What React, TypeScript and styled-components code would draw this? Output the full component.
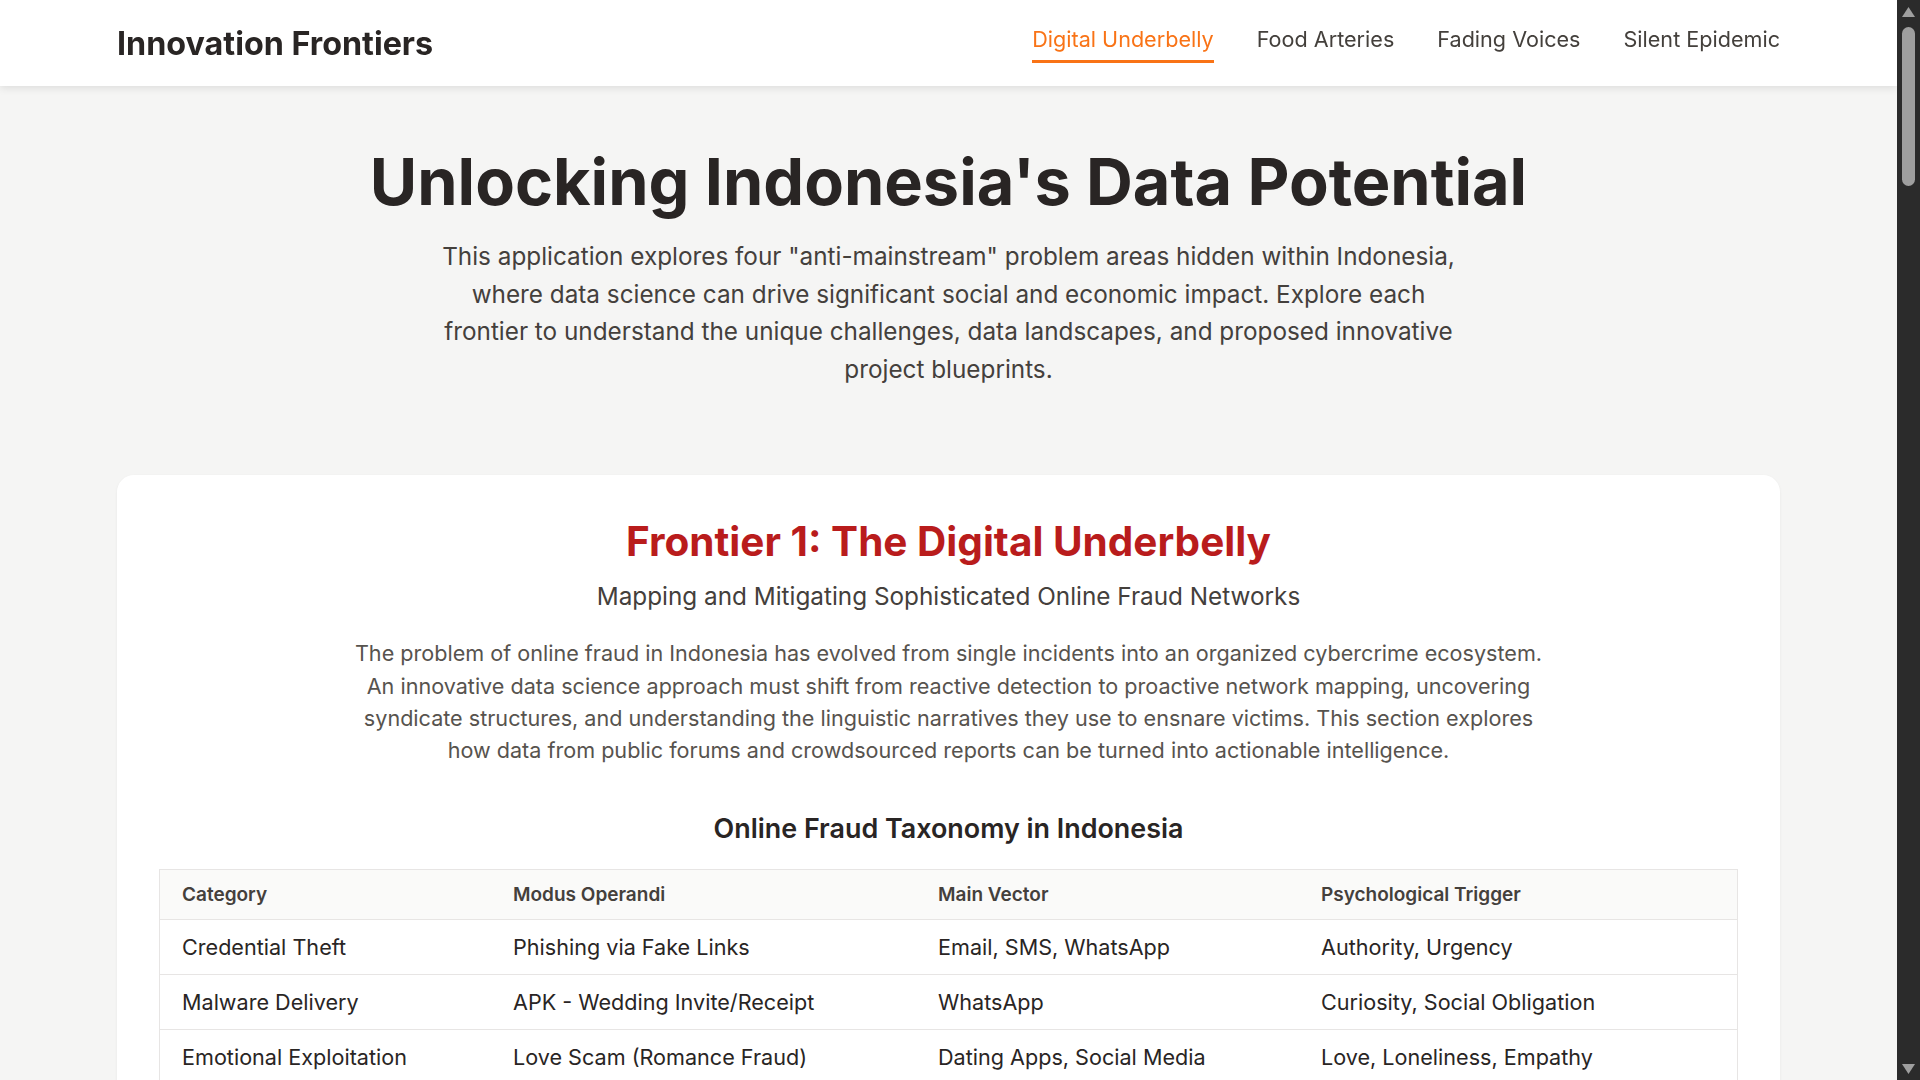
import React from "react";
import styled, { createGlobalStyle } from "styled-components";

const GlobalStyle = createGlobalStyle`
  html, body {
    margin: 0;
    height: 100%;
    overflow: hidden;
  }

  body {
    background: #f5f5f4;
    font-family: Inter, "Noto Sans", sans-serif;
    color: #292524;
  }
`;

type Frontier = {
  id: string;
  nav: string;
  accent: string;
  title: string;
  subtitle: string;
  text: string;
  tableTitle: string;
  columns: string[];
  rows: string[][];
  sources: { name: string; detail: string }[];
  blueprint: { step: string; text: string }[];
};

const frontiers: Frontier[] = [
  {
    id: "digital",
    nav: "Digital Underbelly",
    accent: "#b91c1c",
    title: "Frontier 1: The Digital Underbelly",
    subtitle: "Mapping and Mitigating Sophisticated Online Fraud Networks",
    text:
      "The problem of online fraud in Indonesia has evolved from single incidents into an organized cybercrime ecosystem. An innovative data science approach must shift from reactive detection to proactive network mapping, uncovering syndicate structures, and understanding the linguistic narratives they use to ensnare victims. This section explores how data from public forums and crowdsourced reports can be turned into actionable intelligence.",
    tableTitle: "Online Fraud Taxonomy in Indonesia",
    columns: ["Category", "Modus Operandi", "Main Vector", "Psychological Trigger"],
    rows: [
      ["Credential Theft", "Phishing via Fake Links", "Email, SMS, WhatsApp", "Authority, Urgency"],
      ["Malware Delivery", "APK - Wedding Invite/Receipt", "WhatsApp", "Curiosity, Social Obligation"],
      ["Emotional Exploitation", "Love Scam (Romance Fraud)", "Dating Apps, Social Media", "Love, Loneliness, Empathy"],
      ["Financial Lure", "Fake Investment & Robot Trading", "Telegram, Instagram", "Greed, Fear of Missing Out"],
      ["Predatory Lending", "Illegal Online Loans (Pinjol)", "Play Store, SMS Blasts", "Financial Pressure, Shame"],
      ["Impersonation", "Fake Courier / Bank Officer", "Phone Call, WhatsApp", "Trust, Fear of Loss"],
    ],
    sources: [
      { name: "Crowdsourced Reports", detail: "Public complaint portals and community reporting of scam numbers and accounts." },
      { name: "Public Forums", detail: "Discussion threads where victims describe scripts, links and payment channels." },
      { name: "Social Media Text", detail: "Posts and comments carrying recurring narratives and bait phrases." },
    ],
    blueprint: [
      { step: "Collect", text: "Scrape and normalize scam reports, phone numbers, account IDs and message texts." },
      { step: "Connect", text: "Build a graph of shared identifiers to reveal clusters that behave as syndicates." },
      { step: "Understand", text: "Apply topic modelling on Bahasa Indonesia texts to track evolving fraud narratives." },
      { step: "Act", text: "Publish an early-warning dashboard for banks, platforms and the public." },
    ],
  },
  {
    id: "food",
    nav: "Food Arteries",
    accent: "#15803d",
    title: "Frontier 2: The Food Arteries",
    subtitle: "Tracing Inefficiencies in the Archipelago's Food Supply Chains",
    text:
      "Food prices across Indonesia's thousands of islands swing sharply between harvest and lean seasons, and between production centres and remote markets. Data on transport routes, market prices and weather can expose where the arteries of the food system are clogged, helping policy makers and farmers respond before shortages turn into crises.",
    tableTitle: "Key Chokepoints in the Food Distribution Chain",
    columns: ["Stage", "Main Issue", "Observable Signal", "Impact"],
    rows: [
      ["Farm Gate", "Low Bargaining Power", "Farm-gate Price Gap", "Farmer Income Loss"],
      ["Collection", "Layered Middlemen", "Margin per Trader Level", "Price Inflation"],
      ["Inter-island Transport", "Port Congestion", "Ship Dwell Time", "Supply Delays"],
      ["Storage", "Limited Cold Chain", "Post-harvest Loss Rate", "Food Waste"],
      ["Retail Market", "Price Speculation", "Daily Price Volatility", "Consumer Burden"],
    ],
    sources: [
      { name: "Market Price Feeds", detail: "Daily commodity prices collected from traditional markets in each province." },
      { name: "Shipping Data", detail: "Vessel schedules and port activity records for inter-island logistics." },
      { name: "Weather & Harvest", detail: "Rainfall, planting calendars and harvest estimates by region." },
    ],
    blueprint: [
      { step: "Collect", text: "Merge price, logistics and weather data into a single spatial time series." },
      { step: "Model", text: "Forecast regional price spikes using lagged supply and transport indicators." },
      { step: "Locate", text: "Identify the routes and nodes that contribute the most to price disparity." },
      { step: "Act", text: "Recommend buffer stock placement and shipping priorities for lean seasons." },
    ],
  },
  {
    id: "voices",
    nav: "Fading Voices",
    accent: "#1d4ed8",
    title: "Frontier 3: The Fading Voices",
    subtitle: "Documenting and Revitalizing Endangered Regional Languages",
    text:
      "Indonesia is home to more than seven hundred living languages, yet many are spoken only by the elderly and are no longer passed to children. Data science can help record, transcribe and analyse these languages at scale, creating resources that communities can use to keep their voices alive for future generations.",
    tableTitle: "Language Vitality Indicators",
    columns: ["Indicator", "Measurement", "Data Source", "Risk Signal"],
    rows: [
      ["Speaker Population", "Estimated Native Speakers", "Census, Field Surveys", "Rapid Decline"],
      ["Intergenerational Use", "Use by Children", "Household Interviews", "Shift to Indonesian"],
      ["Documentation", "Recorded Hours & Texts", "Archives, Universities", "No Written Form"],
      ["Digital Presence", "Online Content Volume", "Web & Social Media", "Absent Online"],
      ["Domain of Use", "Contexts of Daily Use", "Ethnographic Notes", "Ritual Use Only"],
    ],
    sources: [
      { name: "Audio Archives", detail: "Recordings held by universities, museums and community initiatives." },
      { name: "Field Surveys", detail: "Speaker counts and sociolinguistic questionnaires from linguists." },
      { name: "Digital Texts", detail: "Scattered online posts, lyrics and local-language social media." },
    ],
    blueprint: [
      { step: "Record", text: "Crowdsource audio with community-led recording kits and simple mobile apps." },
      { step: "Transcribe", text: "Use low-resource speech recognition to speed up transcription work." },
      { step: "Map", text: "Build a vitality map that ranks languages by urgency of intervention." },
      { step: "Revive", text: "Create learning materials and dictionaries from the collected corpus." },
    ],
  },
  {
    id: "epidemic",
    nav: "Silent Epidemic",
    accent: "#7e22ce",
    title: "Frontier 4: The Silent Epidemic",
    subtitle: "Revealing the Hidden Burden of Mental Health Across the Nation",
    text:
      "Mental health conditions in Indonesia remain heavily under-reported due to stigma, limited services and the concentration of psychiatrists in large cities. Anonymous digital traces, help-seeking searches and service availability data can reveal where the need is greatest and where support is missing.",
    tableTitle: "Signals of Hidden Mental Health Needs",
    columns: ["Signal", "Source", "What It Reveals", "Limitation"],
    rows: [
      ["Search Trends", "Search Engine Queries", "Help-seeking Behaviour", "No Demographics"],
      ["Hotline Calls", "Crisis Service Logs", "Acute Distress Peaks", "Low Awareness"],
      ["Service Coverage", "Facility Registries", "Care Deserts", "Outdated Records"],
      ["Online Discourse", "Forums, Social Media", "Stigma & Narratives", "Sampling Bias"],
      ["School Surveys", "Education Offices", "Youth Wellbeing", "Irregular Timing"],
    ],
    sources: [
      { name: "Search & Social Data", detail: "Aggregated and anonymised trends of mental health related queries." },
      { name: "Health Facility Data", detail: "Locations and capacities of clinics, hospitals and counsellors." },
      { name: "Survey Data", detail: "National and regional health surveys with wellbeing modules." },
    ],
    blueprint: [
      { step: "Aggregate", text: "Combine anonymised digital signals with official health statistics." },
      { step: "Estimate", text: "Use small-area estimation to infer need in districts without surveys." },
      { step: "Compare", text: "Overlay estimated need with service coverage to find care deserts." },
      { step: "Act", text: "Guide placement of tele-counselling and community health workers." },
    ],
  },
];

const App: React.FC = () => {
  return (
    <Shell>
      <GlobalStyle />
      <Scroller>
        <Header>
          <HeaderInner>
            <Logo>Innovation Frontiers</Logo>
            <Nav>
              {frontiers.map((f, i) => (
                <NavLink key={f.id} $active={i === 0}>
                  {f.nav}
                </NavLink>
              ))}
            </Nav>
          </HeaderInner>
        </Header>

        <Main>
          <Hero>
            <HeroTitle>Unlocking Indonesia's Data Potential</HeroTitle>
            <HeroText>
              This application explores four "anti-mainstream" problem areas hidden within Indonesia,
              where data science can drive significant social and economic impact. Explore each
              frontier to understand the unique challenges, data landscapes, and proposed innovative
              project blueprints.
            </HeroText>
          </Hero>

          {frontiers.map((f) => (
            <Card key={f.id} id={f.id}>
              <CardTitle $color={f.accent}>{f.title}</CardTitle>
              <CardSubtitle>{f.subtitle}</CardSubtitle>
              <CardText>{f.text}</CardText>

              <SectionTitle>{f.tableTitle}</SectionTitle>
              <TableWrap>
                <Table>
                  <colgroup>
                    <col style={{ width: 331 }} />
                    <col style={{ width: 425 }} />
                    <col style={{ width: 383 }} />
                    <col />
                  </colgroup>
                  <thead>
                    <tr>
                      {f.columns.map((c) => (
                        <Th key={c}>{c}</Th>
                      ))}
                    </tr>
                  </thead>
                  <tbody>
                    {f.rows.map((r) => (
                      <tr key={r[0]}>
                        {r.map((cell, j) => (
                          <Td key={j}>{cell}</Td>
                        ))}
                      </tr>
                    ))}
                  </tbody>
                </Table>
              </TableWrap>

              <SectionTitle>The Data Landscape</SectionTitle>
              <SourceGrid>
                {f.sources.map((s) => (
                  <SourceCard key={s.name} $color={f.accent}>
                    <SourceName>{s.name}</SourceName>
                    <SourceDetail>{s.detail}</SourceDetail>
                  </SourceCard>
                ))}
              </SourceGrid>

              <SectionTitle>Project Blueprint</SectionTitle>
              <Steps>
                {f.blueprint.map((b, i) => (
                  <Step key={b.step}>
                    <StepNumber $color={f.accent}>{i + 1}</StepNumber>
                    <div>
                      <StepName>{b.step}</StepName>
                      <StepText>{b.text}</StepText>
                    </div>
                  </Step>
                ))}
              </Steps>
            </Card>
          ))}
        </Main>

        <Footer>Innovation Frontiers · Data science for Indonesia's hidden problems</Footer>
      </Scroller>

      {/* window scrollbar, drawn because the capture hides native ones */}
      <Rail aria-hidden="true">
        <RailButton>
          <svg width="13" height="10" viewBox="0 0 13 10">
            <polygon points="0,10 6.5,0 13,10" fill="#9f9f9f" />
          </svg>
        </RailButton>
        <RailTrack>
          <RailThumb />
        </RailTrack>
        <RailButton>
          <svg width="13" height="10" viewBox="0 0 13 10">
            <polygon points="0,0 13,0 6.5,10" fill="#9f9f9f" />
          </svg>
        </RailButton>
      </Rail>
    </Shell>
  );
};

const Shell = styled.div`
  display: flex;
  height: 100vh;
`;

const Scroller = styled.div`
  flex: 1;
  min-width: 0;
  overflow-y: auto;
  scrollbar-width: none;
`;

const Rail = styled.div`
  flex: none;
  width: 23px;
  background: #2b2b2b;
  display: flex;
  flex-direction: column;
`;

const RailButton = styled.div`
  flex: none;
  height: 23px;
  display: flex;
  align-items: center;
  justify-content: center;
`;

const RailTrack = styled.div`
  flex: 1;
  padding: 4px 5px;
`;

const RailThumb = styled.div`
  height: 159px;
  border-radius: 7px;
  background: #9f9f9f;
`;

const Header = styled.header`
  position: sticky;
  top: 0;
  z-index: 10;
  height: 86px;
  background: #ffffff;
  box-shadow: 0 2px 8px rgba(0, 0, 0, 0.1);
`;

const HeaderInner = styled.div`
  height: 100%;
  padding: 0 117px;
  display: flex;
  align-items: center;
  justify-content: space-between;
`;

const Logo = styled.div`
  font-size: 32.3px;
  font-weight: 700;
  color: #292524;
`;

const Nav = styled.nav`
  display: flex;
  gap: 43px;
`;

const NavLink = styled.a<{ $active?: boolean }>`
  font-size: 21.6px;
  line-height: 32px;
  padding-bottom: 5px;
  border-bottom: 3px solid ${(p) => (p.$active ? "#f97316" : "transparent")};
  color: ${(p) => (p.$active ? "#f97316" : "#44403c")};
  cursor: pointer;
`;

const Main = styled.main`
  padding: 0 117px 80px;
  display: flex;
  flex-direction: column;
  gap: 64px;
`;

const Hero = styled.section`
  padding: 60px 0 22px;
  display: flex;
  flex-direction: column;
  align-items: center;
  text-align: center;
`;

const HeroTitle = styled.h1`
  margin: 0;
  font-size: 64.8px;
  line-height: 72px;
  font-weight: 700;
  color: #292524;
`;

const HeroText = styled.p`
  margin: 20px 0 0;
  max-width: 1024px;
  font-size: 24.3px;
  line-height: 37.7px;
  color: #44403c;
`;

const Card = styled.section`
  background: #ffffff;
  border-radius: 17px;
  box-shadow: 0 1px 3px rgba(0, 0, 0, 0.06);
  padding: 43px 43px 56px;
  display: flex;
  flex-direction: column;
  align-items: center;
  text-align: center;
`;

const CardTitle = styled.h2<{ $color: string }>`
  margin: 0;
  font-size: 40.5px;
  line-height: 47.5px;
  font-weight: 700;
  color: ${(p) => p.$color};
`;

const CardSubtitle = styled.p`
  margin: 15px 0 0;
  font-size: 24.3px;
  line-height: 32px;
  color: #44403c;
`;

const CardText = styled.p`
  margin: 25px 0 0;
  max-width: 1200px;
  font-size: 21.6px;
  line-height: 32.2px;
  color: #57534e;
`;

const SectionTitle = styled.h3`
  margin: 45px 0 24px;
  font-size: 26.9px;
  line-height: 34.3px;
  font-weight: 600;
  color: #292524;
`;

const TableWrap = styled.div`
  width: 100%;
  border: 1px solid #e7e5e4;
`;

const Table = styled.table`
  width: 100%;
  border-collapse: collapse;
  text-align: left;
`;

const Th = styled.th`
  padding: 12px 22px;
  font-size: 19px;
  line-height: 25px;
  font-weight: 600;
  color: #44403c;
  background: #fafaf9;
  border-bottom: 1px solid #e7e5e4;
`;

const Td = styled.td`
  padding: 13px 22px;
  font-size: 21.6px;
  line-height: 28px;
  color: #292524;
  border-bottom: 1px solid #e7e5e4;
`;

const SourceGrid = styled.div`
  width: 100%;
  display: grid;
  grid-template-columns: repeat(3, 1fr);
  gap: 24px;
  text-align: left;
`;

const SourceCard = styled.div<{ $color: string }>`
  padding: 28px;
  border-radius: 12px;
  background: #fafaf9;
  border: 1px solid #e7e5e4;
  border-top: 4px solid ${(p) => p.$color};
  min-height: 160px;
`;

const SourceName = styled.div`
  font-size: 21.6px;
  font-weight: 600;
  color: #292524;
`;

const SourceDetail = styled.p`
  margin: 12px 0 0;
  font-size: 19px;
  line-height: 30px;
  color: #57534e;
`;

const Steps = styled.div`
  width: 100%;
  display: grid;
  grid-template-columns: repeat(2, 1fr);
  gap: 24px;
  text-align: left;
`;

const Step = styled.div`
  display: flex;
  gap: 20px;
  padding: 28px;
  border-radius: 12px;
  border: 1px solid #e7e5e4;
  min-height: 150px;
`;

const StepNumber = styled.div<{ $color: string }>`
  flex: none;
  width: 44px;
  height: 44px;
  border-radius: 50%;
  background: ${(p) => p.$color};
  color: #ffffff;
  font-size: 20px;
  font-weight: 700;
  display: flex;
  align-items: center;
  justify-content: center;
`;

const StepName = styled.div`
  font-size: 21.6px;
  font-weight: 600;
  color: #292524;
`;

const StepText = styled.p`
  margin: 10px 0 0;
  font-size: 19px;
  line-height: 30px;
  color: #57534e;
`;

const Footer = styled.footer`
  padding: 40px 117px;
  text-align: center;
  font-size: 19px;
  color: #78716c;
`;

export default App;
